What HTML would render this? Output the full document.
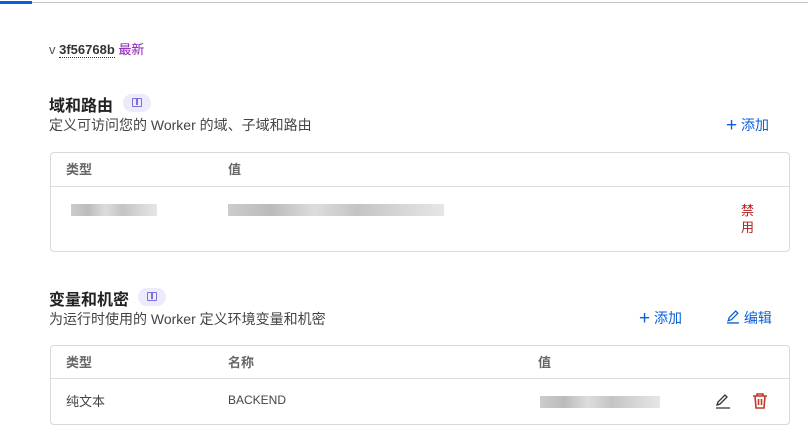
<!DOCTYPE html>
<html><head><meta charset="utf-8"><style>
*{margin:0;padding:0;box-sizing:border-box}
body{width:808px;height:442px;overflow:hidden;background:#fff;font-family:"Liberation Sans","Noto Sans CJK SC",sans-serif;color:#333;position:relative}
.a{position:absolute;white-space:nowrap}
.h{font-size:16px;font-weight:bold;color:#222}
.s{font-size:14px;color:#444}
.tag{position:absolute;width:28px;height:18px;border-radius:9px;background:#ecebfb}
.tag i{position:absolute;left:9px;top:4px;width:10px;height:9px;border:1.5px solid #7b6fd8;border-radius:1px}
.tag i:after{content:"";position:absolute;left:3px;top:0;width:1.5px;height:6px;background:#7b6fd8}
.box{position:absolute;left:50px;width:740px;border:1px solid #d9d9d9;border-radius:4px}
.th{font-size:13px;color:#666;font-weight:bold}
.blue{color:#0b5fd8;font-size:14px}
.bar{position:absolute;height:12px;background:linear-gradient(90deg,#ccc,#bbb 20%,#ddd 40%,#c4c4c4 60%,#d6d6d6 80%,#e6e6e6)}
</style></head><body>
<div class="a" style="left:0;top:2px;width:808px;height:1px;background:#c4c4c4"></div>
<div class="a" style="left:0;top:1px;width:32px;height:3px;background:#0b5fd8"></div>
<div class="a" style="left:49px;top:39px;font-size:13px;color:#555">v <b style="color:#333;border-bottom:1px dotted #333">3f56768b</b> <span style="color:#8c1bb5">最新</span></div>

<div class="a h" style="left:49px;top:92px">域和路由</div>
<div class="tag" style="left:123px;top:94px"><i></i></div>
<div class="a s" style="left:49px;top:115px">定义可访问您的 Worker 的域、子域和路由</div>
<div class="a blue" style="left:726px;top:114px"><span style="font-size:19px;position:relative;top:1px">+</span> 添加</div>
<div class="box" style="top:152px;height:100px">
 <div class="a th" style="left:15px;top:6px">类型</div>
 <div class="a th" style="left:177px;top:6px">值</div>
 <div class="a" style="left:0;top:33px;width:738px;height:1px;background:#ddd"></div>
 <div class="bar" style="left:20px;top:51px;width:86px"></div>
 <div class="bar" style="left:177px;top:51px;width:216px"></div>
 <div class="a" style="left:690px;top:49px;font-size:13px;color:#b31b1b;line-height:17px;white-space:normal;width:14px">禁用</div>
</div>

<div class="a h" style="left:49px;top:286px">变量和机密</div>
<div class="tag" style="left:138px;top:288px"><i></i></div>
<div class="a s" style="left:49px;top:309px">为运行时使用的 Worker 定义环境变量和机密</div>
<div class="a blue" style="left:639px;top:307px"><span style="font-size:19px;position:relative;top:1px">+</span> 添加</div>
<div class="a blue" style="left:726px;top:308px"><svg width="14" height="14" viewBox="0 0 13 13" style="vertical-align:-1px"><path d="M2 10l1-3 6-6 2 2-6 6z M1 12h11" fill="none" stroke="#0b5fd8" stroke-width="1.2"/></svg> 编辑</div>
<div class="box" style="top:345px;height:80px">
 <div class="a th" style="left:15px;top:6px">类型</div>
 <div class="a th" style="left:177px;top:6px">名称</div>
 <div class="a th" style="left:487px;top:6px">值</div>
 <div class="a" style="left:0;top:32px;width:738px;height:1px;background:#ddd"></div>
 <div class="a" style="left:15px;top:45px;font-size:13px;color:#444">纯文本</div>
 <div class="a" style="left:177px;top:47px;font-size:12px;color:#444">BACKEND</div>
 <div class="bar" style="left:489px;top:50px;width:120px"></div>
 <svg class="a" style="left:663px;top:46px" width="18" height="18" viewBox="0 0 18 18"><path d="M3 13l1-3 7-7 2 2-7 7z M2 16h14" fill="none" stroke="#333" stroke-width="1.3"/></svg>
 <svg class="a" style="left:700px;top:46px" width="18" height="18" viewBox="0 0 18 18"><path d="M2 4h14 M6 4V2h6v2 M4 4l1 12h8l1-12 M7.5 7v6 M10.5 7v6" fill="none" stroke="#c0392b" stroke-width="1.6"/></svg>
</div>
</body></html>
